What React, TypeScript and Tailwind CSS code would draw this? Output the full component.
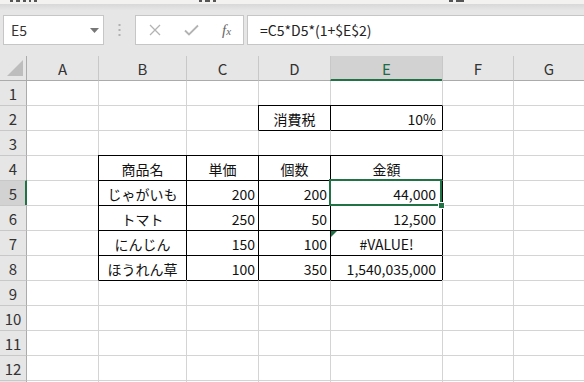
import React from "react";

const COLS = ["A", "B", "C", "D", "E", "F", "G"];
const WIDTHS = [71, 88, 72, 72, 112, 71, 71];

type Cell = { v: string; align: "l" | "c" | "r" };

const data: Record<string, Cell> = {
  D2: { v: "消費税", align: "c" },
  E2: { v: "10%", align: "r" },
  B4: { v: "商品名", align: "c" },
  C4: { v: "単価", align: "c" },
  D4: { v: "個数", align: "c" },
  E4: { v: "金額", align: "c" },
  B5: { v: "じゃがいも", align: "c" },
  C5: { v: "200", align: "r" },
  D5: { v: "200", align: "r" },
  E5: { v: "44,000", align: "r" },
  B6: { v: "トマト", align: "c" },
  C6: { v: "250", align: "r" },
  D6: { v: "50", align: "r" },
  E6: { v: "12,500", align: "r" },
  B7: { v: "にんじん", align: "c" },
  C7: { v: "150", align: "r" },
  D7: { v: "100", align: "r" },
  E7: { v: "#VALUE!", align: "c" },
  B8: { v: "ほうれん草", align: "c" },
  C8: { v: "100", align: "r" },
  D8: { v: "350", align: "r" },
  E8: { v: "1,540,035,000", align: "r" },
};

function inT(r: number, c: number) {
  if (r >= 4 && r <= 8 && c >= 1 && c <= 4) return true;
  if (r === 2 && c >= 3 && c <= 4) return true;
  return false;
}

const font = { fontFamily: '"Noto Sans CJK JP", "Noto Sans", sans-serif' };

function BodyCell({ r, c }: { r: number; c: number }) {
  const key = COLS[c] + r;
  const cell = data[key];
  const hasL = c >= 1;
  const blackL = inT(r, c) || inT(r, c - 1);
  const hasT = r >= 2;
  const blackT = inT(r, c) || inT(r - 1, c);
  const cls = [
    "relative flex items-center overflow-hidden whitespace-nowrap text-[14px] leading-none text-[#111]",
    hasL ? (blackL ? "border-l border-l-black" : "border-l border-l-[#d4d4d4]") : "",
    hasT ? (blackT ? "border-t border-t-black" : "border-t border-t-[#d4d4d4]") : "",
    cell?.align === "c" ? "justify-center" : cell?.align === "r" ? (c === 4 ? "justify-end pr-[6px]" : "justify-end pr-[3px]") : "",
  ].join(" ");
  return (
    <div className={cls}>
      {key === "E7" && (
        <div className="absolute left-0 top-0 w-0 h-0 border-t-[6px] border-t-[#1e7145] border-r-[6px] border-r-transparent" />
      )}
      {cell && <span className="pt-[1px]">{cell.v}</span>}
    </div>
  );
}

function Frag({ widths }: { widths: number[] }) {
  return (
    <div className="flex items-start gap-[3px]">
      {widths.map((w, i) => (
        <div key={i} className="h-[2px] bg-[#555]" style={{ width: w }} />
      ))}
    </div>
  );
}

export default function App() {
  const rows = Array.from({ length: 13 }, (_, i) => i + 1);
  return (
    <div className="w-[584px] h-[382px] overflow-hidden bg-white relative" style={font}>
      {/* top ribbon remnant (bottoms of cut-off tab labels) */}
      <div className="h-[4px] bg-[#f3f2f1] flex items-start">
        <div className="ml-[10px]">
          <Frag widths={[3, 4, 3, 2, 3]} />
        </div>
        <div className="ml-[162px]">
          <Frag widths={[3, 5, 3]} />
        </div>
        <div className="ml-[233px]">
          <Frag widths={[4, 8]} />
        </div>
      </div>
      {/* formula toolbar */}
      <div className="h-[52px] bg-gradient-to-b from-[#d8d8d8] via-[#e6e6e6] via-[12%] to-[#e6e6e6] flex items-start pt-[11px]">
        <div className="ml-[3px] w-[101px] h-[30px] bg-white border border-[#c6c6c6] flex items-center justify-between pl-[7px] pr-[4px]">
          <span className="text-[14px] text-[#333] leading-none">E5</span>
          <svg width="9" height="5" viewBox="0 0 9 5">
            <path d="M0 0 L9 0 L4.5 5 Z" fill="#777" />
          </svg>
        </div>
        <div className="w-[31px] h-[30px] flex items-center justify-center">
          <svg width="3" height="12" viewBox="0 0 3 12">
            <rect x="0.5" y="0" width="2" height="2" fill="#b0b0b0" />
            <rect x="0.5" y="5" width="2" height="2" fill="#b0b0b0" />
            <rect x="0.5" y="10" width="2" height="2" fill="#b0b0b0" />
          </svg>
        </div>
        <div className="w-[109px] h-[30px] bg-white border border-[#c6c6c6] flex items-center">
          <div className="w-[37px] flex justify-center">
            <svg width="12" height="12" viewBox="0 0 12 12">
              <path d="M1 1 L11 11 M11 1 L1 11" stroke="#b3b3b3" strokeWidth="1.3" />
            </svg>
          </div>
          <div className="w-[37px] flex justify-center">
            <svg width="15" height="12" viewBox="0 0 15 12">
              <path d="M1 6.5 L5 10.5 L14 1.5" stroke="#b3b3b3" strokeWidth="1.8" fill="none" />
            </svg>
          </div>
          <div className="w-[33px] flex justify-center">
            <span
              className="italic text-[15px] text-[#666] leading-none"
              style={{ fontFamily: '"Liberation Serif", "DejaVu Serif", serif' }}
            >
              f<span className="text-[11px]">x</span>
            </span>
          </div>
        </div>
        <div className="ml-[3px] flex-1 h-[30px] bg-white border border-r-0 border-[#c6c6c6] flex items-center pl-[12px]">
          <span className="text-[14px] text-[#222] leading-none">=C5*D5*(1+$E$2)</span>
        </div>
      </div>
      {/* sheet */}
      <div
        className="relative grid"
        style={{
          gridTemplateColumns: `27px ${WIDTHS.map((w) => w + "px").join(" ")}`,
          gridTemplateRows: `25px 24px repeat(12, 25px)`,
        }}
      >
        <div className="bg-[#e6e6e6] border-r border-r-[#ababab] border-b border-b-[#ababab] relative">
          <svg className="absolute left-[7px] top-[4px]" width="17" height="17" viewBox="0 0 17 17">
            <path d="M0 16 L16 16 L16 0 Z" fill="#bdbdbd" />
          </svg>
        </div>
        {COLS.map((c, i) => (
          <div
            key={c}
            className={[
              "flex items-center justify-center text-[15px] leading-none",
              i >= 1 ? "border-l border-l-[#c8c8c8]" : "",
              c === "E"
                ? "bg-[#d2d2d2] text-[#1e6b43] border-b-2 border-b-[#217346]"
                : "bg-[#e6e6e6] text-[#333] border-b border-b-[#ababab]",
            ].join(" ")}
          >
            <span className="pt-[1px]">{c}</span>
          </div>
        ))}
        {rows.map((r) => (
          <React.Fragment key={r}>
            <div
              className={[
                "flex items-center justify-center text-[15px] leading-none text-[#333]",
                r >= 2 ? "border-t border-t-[#c8c8c8]" : "",
                r === 5 ? "bg-[#d2d2d2] border-r-2 border-r-[#217346] pl-[1px]" : "bg-[#e6e6e6] border-r border-r-[#ababab]",
              ].join(" ")}
            >
              {r <= 12 && <span className="pt-[1px]">{r}</span>}
            </div>
            {COLS.map((_, c) => (
              <BodyCell key={c} r={r} c={c} />
            ))}
          </React.Fragment>
        ))}
        <div className="absolute left-[329px] top-[123px] w-[113px] h-[27px] border-2 border-[#217346] pointer-events-none" />
        <div className="absolute left-[438px] top-[146px] w-[7px] h-[7px] bg-[#217346] border border-white" />
      </div>
    </div>
  );
}
